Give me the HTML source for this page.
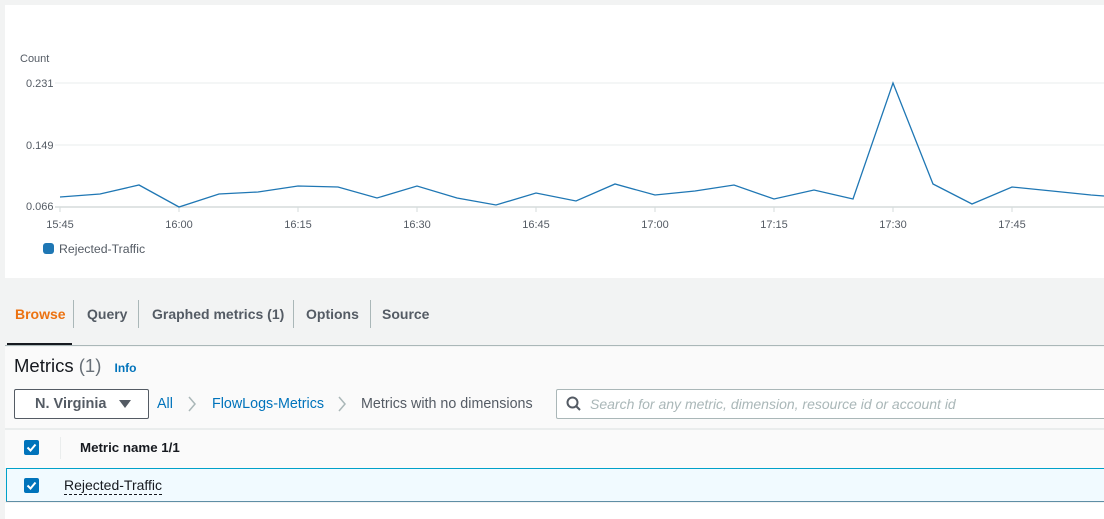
<!DOCTYPE html>
<html><head><style>
*{box-sizing:border-box;margin:0;padding:0}
body{width:1104px;height:519px;overflow:hidden;background:#f2f3f3;font-family:"Liberation Sans",sans-serif;position:relative;color:#16191f}
.abs{position:absolute}
.tab{position:absolute;top:306px;font-size:14px;font-weight:bold;color:#545b64;white-space:nowrap}
.sep{position:absolute;top:300px;width:1px;height:28px;background:#aab7b8}
.cb{position:absolute;width:15px;height:15px;background:#0073bb;border-radius:2px}
</style></head><body>
<div class="abs" style="left:5px;top:5px;width:1099px;height:273px;background:#fff"></div>
<svg class="abs" style="left:0;top:0" width="1104" height="280">
<g font-family="Liberation Sans" font-size="11" fill="#545b64">
<text x="20" y="62">Count</text>
<text x="26" y="87">0.231</text>
<text x="26" y="149">0.149</text>
<text x="26" y="210">0.066</text>
</g>
<line x1="55" y1="83" x2="1104" y2="83" stroke="#eaeded"/>
<line x1="55" y1="145" x2="1104" y2="145" stroke="#eaeded"/>
<line x1="55" y1="207" x2="1104" y2="207" stroke="#d5dbdb" stroke-width="1.5"/>
<g stroke="#d5dbdb"><line x1="60" y1="207" x2="60" y2="212"/><line x1="179" y1="207" x2="179" y2="212"/><line x1="298" y1="207" x2="298" y2="212"/><line x1="417" y1="207" x2="417" y2="212"/><line x1="536" y1="207" x2="536" y2="212"/><line x1="655" y1="207" x2="655" y2="212"/><line x1="774" y1="207" x2="774" y2="212"/><line x1="893" y1="207" x2="893" y2="212"/><line x1="1012" y1="207" x2="1012" y2="212"/></g>
<g font-family="Liberation Sans" font-size="11" fill="#545b64" text-anchor="middle">
<text x="60" y="228">15:45</text><text x="179" y="228">16:00</text><text x="298" y="228">16:15</text><text x="417" y="228">16:30</text><text x="536" y="228">16:45</text><text x="655" y="228">17:00</text><text x="774" y="228">17:15</text><text x="893" y="228">17:30</text><text x="1012" y="228">17:45</text>
</g>
<polyline fill="none" stroke="#1f77b4" stroke-width="1.3" points="60,197 100,194 139,185 179,207 219,194 258,192 298,186 338,187 377,198 417,186 457,198 496,205 536,193 576,201 615,184 655,195 695,191 734,185 774,199 814,190 853,199 893,83 933,184 972,204 1012,187 1052,191 1091,195 1104,196"/>
<rect x="43" y="243" width="11" height="11" rx="3" fill="#1f77b4"/>
<text x="59" y="253" font-family="Liberation Sans" font-size="12.3" fill="#545b64">Rejected-Traffic</text>
<rect x="759" y="286" width="12" height="2" fill="#545b64"/><rect x="759" y="290" width="12" height="2" fill="#545b64"/>
</svg>
<span class="tab" style="left:15px;color:#ec7211">Browse</span><div class="sep" style="left:73px"></div>
<span class="tab" style="left:87px">Query</span><div class="sep" style="left:138px"></div>
<span class="tab" style="left:152px">Graphed metrics (1)</span><div class="sep" style="left:293px"></div>
<span class="tab" style="left:306px">Options</span><div class="sep" style="left:370px"></div>
<span class="tab" style="left:382px">Source</span>
<div class="abs" style="left:7px;top:343px;width:65px;height:3px;background:#16191f"></div>
<div class="abs" style="left:5px;top:345px;width:1099px;height:1px;background:#aab7b8"></div>
<div class="abs" style="left:5px;top:347px;width:1099px;height:120px;background:#fafafa"></div>
<div class="abs" style="left:14px;top:355px;font-size:18.5px;color:#16191f;white-space:nowrap">Metrics <span style="color:#687078">(1)</span> <span style="font-size:12px;font-weight:bold;color:#0073bb;margin-left:8px">Info</span></div>
<div class="abs" style="left:14px;top:389px;width:135px;height:30px;border:1px solid #545b64;border-radius:2px;background:#fff;font-size:14.5px;font-weight:bold;color:#545b64;padding:6px 0 0 20px;white-space:nowrap">N. Virginia</div>
<svg class="abs" style="left:118px;top:399px" width="14" height="10"><path d="M1 1 L13 1 L7 9 Z" fill="#545b64"/></svg>
<div class="abs" style="left:157px;top:396px;font-size:14.3px;color:#0073bb">All</div>
<svg class="abs" style="left:187px;top:396px" width="10" height="16"><path d="M2 1 L8 8 L2 15" fill="none" stroke="#aab7b8" stroke-width="1.5"/></svg>
<div class="abs" style="left:212px;top:396px;font-size:14.3px;color:#0073bb;white-space:nowrap">FlowLogs-Metrics</div>
<svg class="abs" style="left:337px;top:396px" width="10" height="16"><path d="M2 1 L8 8 L2 15" fill="none" stroke="#aab7b8" stroke-width="1.5"/></svg>
<div class="abs" style="left:361px;top:396px;font-size:14.3px;color:#545b64;white-space:nowrap">Metrics with no dimensions</div>
<div class="abs" style="left:556px;top:389px;width:560px;height:30px;border:1px solid #aab7b8;border-radius:2px;background:#fff"></div>
<svg class="abs" style="left:566px;top:396px" width="16" height="16"><circle cx="6.5" cy="6.5" r="5" fill="none" stroke="#545b64" stroke-width="2"/><line x1="10" y1="10" x2="14" y2="14" stroke="#545b64" stroke-width="2"/></svg>
<div class="abs" style="left:590px;top:396px;font-size:14px;font-style:italic;color:#aab7b8;white-space:nowrap">Search for any metric, dimension, resource id or account id</div>
<div class="abs" style="left:5px;top:428px;width:1099px;height:2px;background:#eaeded"></div>
<div class="abs" style="left:5px;top:430px;width:1099px;height:38px;background:#fafafa"></div>
<div class="cb" style="left:24px;top:440px"><svg width="15" height="15"><path d="M3.5 7.5 L6.5 10.5 L11.5 4.5" fill="none" stroke="#fff" stroke-width="2"/></svg></div>
<div class="abs" style="left:60px;top:437px;width:1px;height:22px;background:#eaeded"></div>
<div class="abs" style="left:80px;top:440px;font-size:13.3px;font-weight:bold;white-space:nowrap">Metric name 1/1</div>
<div class="abs" style="left:6px;top:468px;width:1098px;height:34px;background:#f1faff;border:1px solid #00a1c9;border-right:none"></div>
<div class="abs" style="left:6px;top:501px;width:1098px;height:1px;background:#5f8ea5"></div>
<div class="cb" style="left:24px;top:478px"><svg width="15" height="15"><path d="M3.5 7.5 L6.5 10.5 L11.5 4.5" fill="none" stroke="#fff" stroke-width="2"/></svg></div>
<div class="abs" style="left:64px;top:477px;font-size:14px;color:#16191f;border-bottom:1px dashed #16191f;padding-bottom:1px;white-space:nowrap">Rejected-Traffic</div>
<div class="abs" style="left:5px;top:503px;width:1099px;height:16px;background:#fff"></div>
</body></html>
